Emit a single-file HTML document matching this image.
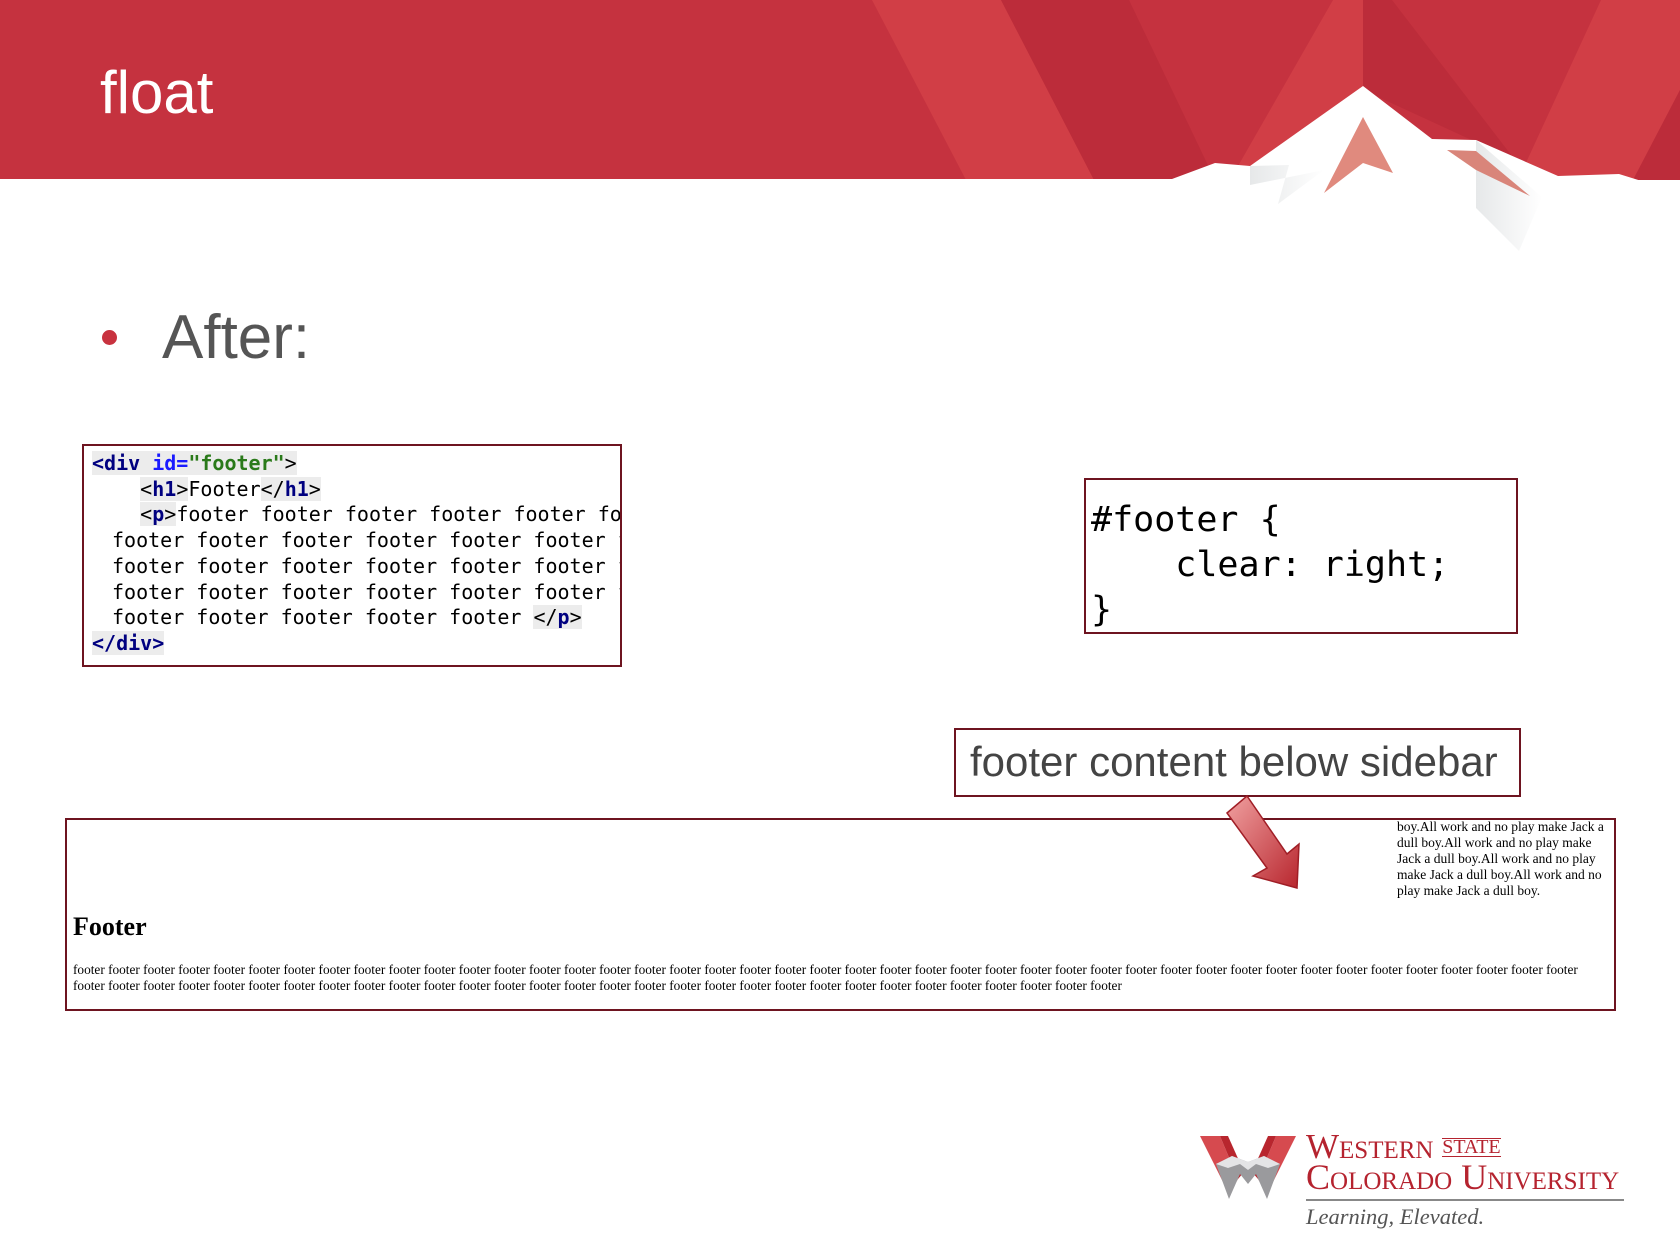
<!DOCTYPE html>
<html><head><meta charset="utf-8"><style>
*{margin:0;padding:0;box-sizing:border-box}
body{width:1680px;height:1260px;position:relative;background:#fff;overflow:hidden;font-family:"Liberation Sans",sans-serif}
.abs{position:absolute}
.code{font-family:"DejaVu Sans Mono","Liberation Mono",monospace;white-space:pre;color:#000}
.tg{color:#000080;font-weight:bold}
.hl{background:#ececec}
.ind{display:inline-block;width:20px;height:1px}
.box{border:2px solid #6e1420}
.serif{font-family:"Liberation Serif",serif}
</style></head><body>
<svg class="abs" style="left:0;top:0" width="1680" height="260" viewBox="0 0 1680 260">
<defs>
<linearGradient id="sl" x1="0" y1="0" x2="1" y2="0"><stop offset="0" stop-color="#e6e8e9"/><stop offset="1" stop-color="#fff"/></linearGradient>
</defs>
<rect width="1680" height="180" fill="#c5323f"/>
<polygon points="872,0 1001,0 1094,180 966,180" fill="#d13e46"/>
<polygon points="1001,0 1129,0 1215,180 1094,180" fill="#bc2c3a"/>
<polygon points="1333,0 1363,0 1363,90 1250,180 1230,180" fill="#d13e46"/>
<polygon points="1363,0 1392,0 1515,160 1363,90" fill="#bc2c3a"/>
<polygon points="1601,0 1680,0 1680,90 1633,180 1518,180" fill="#d13e46"/>
<polygon points="1680,90 1680,180 1633,180" fill="#bc2c3a"/>
<polygon points="0,179 1172,179 1215,163 1250,166 1363,86 1432,139 1476,140 1558,176 1619,174 1680,193 1680,260 0,260" fill="#fff"/>
<polygon points="1250,166 1289,165 1278,204 1324,170 1250,185" fill="url(#sl)"/>
<polygon points="1476,140 1476,208 1519,251 1542,197" fill="url(#sl)"/>
<polygon points="1363,117 1324,193 1363,163 1393,173" fill="#e08a7e"/>
<polygon points="1447,150 1476,151 1530,196 1476,170" fill="#d9857a"/>
</svg>
<div class="abs" style="left:100px;top:58px;font-size:60px;color:#fff">float</div>
<div class="abs" style="left:102px;top:330px;width:15px;height:15px;border-radius:50%;background:#c8323f"></div>
<div class="abs" style="left:162px;top:302px;font-size:62px;color:#555">After:</div>

<div class="abs box" style="left:82px;top:444px;width:540px;height:223px;overflow:hidden">
<div class="code abs" style="left:8px;top:5px;font-size:20px;line-height:25.7px"><span class="hl"><span class="tg">&lt;div</span> <span style="color:#1a1aff;font-weight:bold">id=</span><span style="color:#2a7a1a;font-weight:bold">"footer"</span>&gt;</span>
    <span class="hl">&lt;<span class="tg">h1</span>&gt;</span>Footer<span class="hl">&lt;/<span class="tg">h1</span>&gt;</span>
    <span class="hl">&lt;<span class="tg">p</span>&gt;</span>footer footer footer footer footer footer
<span class="ind"></span>footer footer footer footer footer footer footer
<span class="ind"></span>footer footer footer footer footer footer footer
<span class="ind"></span>footer footer footer footer footer footer footer
<span class="ind"></span>footer footer footer footer footer <span class="hl">&lt;/<span class="tg">p</span>&gt;</span>
<span class="hl tg">&lt;/div&gt;</span></div></div>

<div class="abs box" style="left:1084px;top:478px;width:434px;height:156px">
<div class="code abs" style="left:5px;top:18px;font-size:35px;line-height:45px">#footer {
    clear: right;
}</div></div>

<div class="abs box" style="left:954px;top:728px;width:567px;height:69px">
<div class="abs" style="left:14px;top:8px;font-size:42px;color:#444;white-space:nowrap">footer content below sidebar</div></div>

<div class="abs box" style="left:65px;top:818px;width:1551px;height:193px;overflow:hidden">
<div class="abs serif" style="left:1330px;top:-1px;width:215px;font-size:13.5px;line-height:16px;color:#000">boy.All work and no play make Jack a dull boy.All work and no play make Jack a dull boy.All work and no play make Jack a dull boy.All work and no play make Jack a dull boy.</div>
<div class="abs serif" style="left:6px;top:92px;font-size:26px;font-weight:bold">Footer</div>
<div class="abs serif" style="left:6px;top:142px;width:1535px;font-size:13.3px;line-height:16px">footer footer footer footer footer footer footer footer footer footer footer footer footer footer footer footer footer footer footer footer footer footer footer footer footer footer footer footer footer footer footer footer footer footer footer footer footer footer footer footer footer footer footer footer footer footer footer footer footer footer footer footer footer footer footer footer footer footer footer footer footer footer footer footer footer footer footer footer footer footer footer footer footer</div>
</div>

<svg class="abs" style="left:1220px;top:788px" width="100" height="110" viewBox="0 0 100 110">
<defs><linearGradient id="ag" x1="0" y1="0" x2="1" y2="1"><stop offset="0" stop-color="#f0a0a0"/><stop offset="1" stop-color="#b8262e"/></linearGradient></defs>
<polygon points="7,25 27,8 67,66 79,56 77,100 33,88 47,80" fill="url(#ag)" stroke="#a01e26" stroke-width="1.5"/>
</svg>

<svg class="abs" style="left:1198px;top:1134px" width="100" height="70" viewBox="0 0 100 70">
<polygon points="2,2 22,2 40,45 31,60" fill="#d64a4f"/>
<polygon points="22,2 30,2 46,38 40,45" fill="#b8262e"/>
<polygon points="98,2 78,2 60,45 69,60" fill="#d64a4f"/>
<polygon points="78,2 70,2 54,38 60,45" fill="#b8262e"/>
<polygon points="18,30 34,22 50,28 66,22 82,30 69,65 58,40 50,50 42,40 31,65" fill="#9a9a9d"/>
<polygon points="18,30 34,22 50,28 66,22 82,30 70,34 58,30 50,36 42,30 30,34" fill="#e4e4e6"/>
</svg>
<div class="abs serif" style="left:1306px;top:1130px;font-size:35px;color:#b5232f;white-space:nowrap;font-variant:small-caps;line-height:34px">Western <span style="font-size:20px;border-top:1px solid #b5232f;border-bottom:1px solid #b5232f;line-height:17px;display:inline-block;vertical-align:5px">STATE</span></div>
<div class="abs serif" style="left:1306px;top:1160px;font-size:36px;color:#b5232f;white-space:nowrap;font-variant:small-caps;line-height:34px">Colorado University</div>
<div class="abs" style="left:1306px;top:1199px;width:318px;height:2px;background:#888"></div>
<div class="abs serif" style="left:1306px;top:1204px;font-size:22.5px;font-style:italic;color:#555;white-space:nowrap">Learning, Elevated.</div>
</body></html>
